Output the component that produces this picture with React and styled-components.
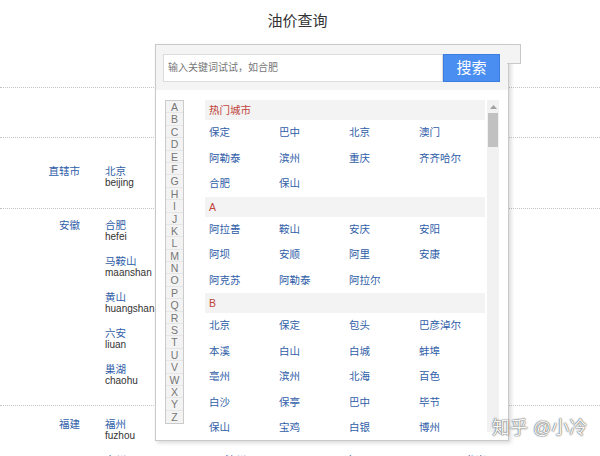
import React from 'react'
import styled, { createGlobalStyle } from 'styled-components'

const GlobalStyle = createGlobalStyle`
  * { box-sizing: border-box; }
  body {
    margin: 0;
    background: #fff;
    font-family: "Liberation Sans", "Noto Sans CJK SC", sans-serif;
  }
`

const Page = styled.div`
  position: relative;
  width: 600px;
  height: 456px;
  overflow: hidden;
`

const TitleBar = styled.div`
  height: 88px;
  border-bottom: 1px dotted #c4c4c4;

  h1 {
    margin: 0;
    font-size: 15px;
    font-weight: normal;
    color: #333;
    line-height: 42px;
    text-align: center;
    padding-right: 5px;
  }
`

const HeadRow = styled.div`
  height: 50px;
  border-bottom: 1px dotted #c4c4c4;
`

const Row = styled.div`
  display: flex;
  align-items: flex-start;
  padding-top: ${(p) => p.$pad}px;
  padding-bottom: 6px;
  height: ${(p) => (p.$h ? `${p.$h}px` : 'auto')};
  border-bottom: ${(p) => (p.$last ? 'none' : '1px dotted #c4c4c4')};
`

const Province = styled.div`
  width: 80px;
  margin-right: 25px;
  text-align: right;
  font-size: 10.5px;
  line-height: 12px;
  color: #2f5ea8;
`

const CityGrid = styled.div`
  display: grid;
  grid-template-columns: repeat(4, 120px);
`

const City = styled.div`
  margin-bottom: 12px;
  line-height: 12px;

  a {
    display: block;
    font-size: 10.5px;
    color: #2f5ea8;
    text-decoration: none;
  }

  span {
    display: block;
    font-size: 10px;
    color: #333;
  }
`

const Popup = styled.div`
  position: absolute;
  left: 155px;
  top: 44px;
  width: 354px;
  height: 397px;
  background: #fff;
  border: 1px solid #c9c9c9;
  box-shadow: 2px 2px 4px rgba(0, 0, 0, 0.15);

  &::after {
    content: '';
    position: absolute;
    top: -1px;
    right: -13px;
    width: 13px;
    height: 18px;
    background: #f4f4f4;
    border: 1px solid #c9c9c9;
    border-left: none;
  }
`

const SearchBar = styled.div`
  display: flex;
  align-items: flex-start;
  height: 45px;
  padding: 9px 0 0 7px;
  background: #f4f4f4;
`

const SearchInput = styled.div`
  width: 280px;
  height: 28px;
  padding-left: 4px;
  background: #fff;
  border: 1px solid #dcdcdc;
  font-size: 10px;
  line-height: 26px;
  color: #777;
`

const SearchButton = styled.button`
  width: 57px;
  height: 28px;
  padding: 0;
  background: #4a8ef2;
  border: 1px solid #3a7ddf;
  color: #fff;
  font-family: "Liberation Sans", "Noto Sans CJK SC", sans-serif;
  font-size: 15px;
  line-height: 24px;
`

const Body = styled.div`
  display: flex;
  align-items: flex-start;
  padding: 10px 0 0 9px;
`

const LetterIndex = styled.div`
  width: 19px;
  margin-right: 21px;
  border: 1px solid #cbcbcb;
  background: #f3f3f3;
`

const Letter = styled.div`
  height: 12.4px;
  font-size: 10.5px;
  line-height: 12.4px;
  text-align: center;
  color: #777;
  border-bottom: ${(p) => (p.$last ? 'none' : '1px solid #e6e6e6')};
`

const ListArea = styled.div`
  width: 280px;
  height: 332px;
  margin-right: 2px;
  overflow: hidden;
`

const SectionHead = styled.div`
  height: 20px;
  padding-left: 4px;
  background: #f3f3f3;
  font-size: 10.5px;
  line-height: 20px;
  color: #c0443a;
`

const SectionGrid = styled.div`
  display: grid;
  grid-template-columns: repeat(4, 70px);
  padding-left: 4px;

  a {
    height: 25.5px;
    font-size: 10.5px;
    line-height: 24px;
    color: #2f5ea8;
    text-decoration: none;
    white-space: nowrap;
  }
`

const ScrollTrack = styled.div`
  display: flex;
  flex-direction: column;
  width: 12px;
  height: 332px;
  background: #f1f1f1;
`

const ScrollArrow = styled.div`
  display: flex;
  justify-content: center;
  align-items: center;
  height: 13px;
`

const ScrollThumb = styled.div`
  height: 34px;
  margin: 0 1px;
  background: #c1c1c1;
`

const Watermark = styled.div`
  position: absolute;
  left: 492px;
  top: 416px;
  font-size: 18px;
  line-height: 24px;
  color: #f4f4f4;
  text-shadow: 0 0 1px #444, 0 0 2px rgba(0, 0, 0, 0.5);
  white-space: nowrap;
`

const rows = [
  {
    name: '直辖市',
    pad: 27,
    h: 71,
    cities: [
      ['北京', 'beijing'],
      ['上海', 'shanghai'],
      ['重庆', 'chongqing'],
      ['天津', 'tianjin'],
    ],
  },
  {
    name: '安徽',
    pad: 10,
    cities: [
      ['合肥', 'hefei'],
      ['芜湖', 'wuhu'],
      ['蚌埠', 'bengbu'],
      ['淮南', 'huainan'],
      ['马鞍山', 'maanshan'],
      ['淮北', 'huaibei'],
      ['铜陵', 'tongling'],
      ['安庆', 'anqing'],
      ['黄山', 'huangshan'],
      ['滁州', 'chuzhou'],
      ['阜阳', 'fuyang'],
      ['宿州', 'suzhou'],
      ['六安', 'liuan'],
      ['亳州', 'bozhou'],
      ['宣城', 'xuancheng'],
      ['池州', 'chizhou'],
      ['巢湖', 'chaohu'],
    ],
  },
  {
    name: '福建',
    pad: 12,
    last: true,
    cities: [
      ['福州', 'fuzhou'],
      ['厦门', 'xiamen'],
      ['莆田', 'putian'],
      ['三明', 'sanming'],
      ['泉州', 'quanzhou'],
      ['漳州', 'zhangzhou'],
      ['南平', 'nanping'],
      ['龙岩', 'longyan'],
    ],
  },
]

const sections = [
  {
    title: '热门城市',
    cities: ['保定', '巴中', '北京', '澳门', '阿勒泰', '滨州', '重庆', '齐齐哈尔', '合肥', '保山'],
  },
  {
    title: 'A',
    cities: ['阿拉善', '鞍山', '安庆', '安阳', '阿坝', '安顺', '阿里', '安康', '阿克苏', '阿勒泰', '阿拉尔'],
  },
  {
    title: 'B',
    cities: [
      '北京', '保定', '包头', '巴彦淖尔', '本溪', '白山', '白城', '蚌埠',
      '亳州', '滨州', '北海', '百色', '白沙', '保亭', '巴中', '毕节',
      '保山', '宝鸡', '白银', '博州', '北屯', '白杨', '宝应', '霸州',
    ],
  },
]

const letters = 'ABCDEFGHIJKLMNOPQRSTUVWXYZ'.split('')

const App = () => {
  return (
    <Page>
      <GlobalStyle />
      <TitleBar>
        <h1>油价查询</h1>
      </TitleBar>
      <HeadRow />
      {rows.map((row) => (
        <Row key={row.name} $pad={row.pad} $h={row.h} $last={row.last}>
          <Province>{row.name}</Province>
          <CityGrid>
            {row.cities.map(([cn, py]) => (
              <City key={py}>
                <a href="#">{cn}</a>
                <span>{py}</span>
              </City>
            ))}
          </CityGrid>
        </Row>
      ))}

      <Popup>
        <SearchBar>
          <SearchInput>输入关键词试试，如合肥</SearchInput>
          <SearchButton>搜索</SearchButton>
        </SearchBar>
        <Body>
          <LetterIndex>
            {letters.map((l, i) => (
              <Letter key={l} $last={i === letters.length - 1}>
                {l}
              </Letter>
            ))}
          </LetterIndex>
          <ListArea>
            {sections.map((s) => (
              <div key={s.title}>
                <SectionHead>{s.title}</SectionHead>
                <SectionGrid>
                  {s.cities.map((c, i) => (
                    <a href="#" key={c + i}>
                      {c}
                    </a>
                  ))}
                </SectionGrid>
              </div>
            ))}
          </ListArea>
          <ScrollTrack>
            <ScrollArrow>
              <svg width="7" height="4" viewBox="0 0 7 4">
                <path d="M0 4 L3.5 0 L7 4 Z" fill="#a0a0a0" />
              </svg>
            </ScrollArrow>
            <ScrollThumb />
          </ScrollTrack>
        </Body>
      </Popup>

      <Watermark>知乎 @小冷</Watermark>
    </Page>
  )
}

export default App
